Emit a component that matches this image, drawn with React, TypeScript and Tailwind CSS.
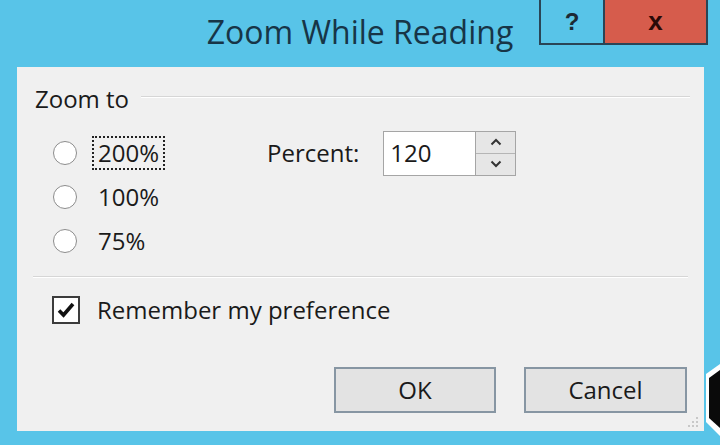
import React from "react";

const body = { fontFamily: '"Open Sans", "Noto Sans", sans-serif' };

function Radio({ label, focused }: { label: string; focused?: boolean }) {
  return (
    <div className="flex h-[44px] items-center">
      <div className="ml-[36px] h-[24px] w-[24px] rounded-full border-[1.5px] border-[#8c8c8c] bg-white" />
      <div
        className={
          focused
            ? "ml-[15px] flex h-[34px] items-center border-2 border-dotted border-[#222] px-[4px]"
            : "ml-[21px] flex h-[34px] items-center"
        }
      >
        <span className="text-[24px] leading-none text-[#1a1a1a]">{label}</span>
      </div>
    </div>
  );
}

function Spinner() {
  return (
    <div className="flex h-[45px] w-[40px] flex-col border border-l-0 border-[#a5a5a5] bg-[#e6e6e6]">
      <div className="flex flex-1 items-center justify-center border-b border-[#b5b5b5]">
        <svg width="12" height="8" viewBox="0 0 12 8">
          <path d="M1.5 6.5 L6 2 L10.5 6.5" fill="none" stroke="#333" strokeWidth="2" />
        </svg>
      </div>
      <div className="flex flex-1 items-center justify-center">
        <svg width="12" height="8" viewBox="0 0 12 8">
          <path d="M1.5 1.5 L6 6 L10.5 1.5" fill="none" stroke="#333" strokeWidth="2" />
        </svg>
      </div>
    </div>
  );
}

function Button({ label, className }: { label: string; className: string }) {
  return (
    <div
      className={
        "flex h-[46px] items-center justify-center border-2 border-[#8796a3] bg-[#e3e3e3] text-[24px] text-[#1a1a1a] " +
        className
      }
    >
      {label}
    </div>
  );
}

export default function App() {
  return (
    <div className="relative flex h-[445px] w-[720px] flex-col overflow-hidden bg-[#58c4e8]" style={body}>
      {/* caption bar */}
      <div className="grid h-[67px] grid-cols-[1fr_auto_1fr]">
        <div />
        <div className="pt-[12px] text-[32px] leading-[40px] text-[#173547]">Zoom While Reading</div>
        <div className="flex justify-end pr-[12px]">
          <div className="flex h-[45px] border-2 border-t-0 border-[#2a4556]">
            <div className="flex w-[62px] items-center justify-center text-[24px] font-bold text-[#1c2a35]" style={{ fontFamily: '"Liberation Sans", sans-serif' }}>
              ?
            </div>
            <div className="flex w-[103px] items-center justify-center border-l-2 border-[#2a4556] bg-[#d65c4c] text-[26px] font-bold text-[#2a0a08]" style={{ fontFamily: '"Liberation Sans", sans-serif' }}>
              x
            </div>
          </div>
        </div>
      </div>

      {/* client area */}
      <div className="ml-[17px] mr-[16px] flex h-[364px] flex-col bg-[#f0f0f0]">
        {/* group header */}
        <div className="mt-[18px] flex h-[28px] items-center pl-[18px] pr-[14px]">
          <span className="text-[24px] leading-none text-[#1a1a1a]">Zoom to</span>
          <div className="ml-[12px] mt-[-4px] flex-1 border-t border-b border-t-[#d6d6d6] border-b-white" />
        </div>

        {/* options */}
        <div className="mt-[18px] flex">
          <div className="flex w-[250px] flex-col">
            <Radio label="200%" focused />
            <Radio label="100%" />
            <Radio label="75%" />
          </div>
          <div className="flex h-[44px] items-center">
            <span className="text-[24px] leading-none text-[#1a1a1a]">Percent:</span>
            <div className="ml-[24px] flex h-[45px] w-[93px] items-center border border-[#a5a5a5] bg-white pl-[6px] text-[24px] text-[#1a1a1a]">
              120
            </div>
            <Spinner />
          </div>
        </div>

        {/* separator */}
        <div className="mx-[16px] mt-[13px] border-t border-b border-t-[#d6d6d6] border-b-white" />

        {/* checkbox */}
        <div className="mt-[14px] flex h-[36px] items-center pl-[35px]">
          <div className="flex h-[28px] w-[28px] items-center justify-center border-2 border-[#3c3c3c] bg-white">
            <svg width="20" height="18" viewBox="0 0 20 18">
              <path d="M3 9.5 L7.5 14 L17 3" fill="none" stroke="#111" strokeWidth="3.6" strokeLinejoin="miter" />
            </svg>
          </div>
          <span className="ml-[17px] text-[24px] leading-none text-[#1a1a1a]">Remember my preference</span>
        </div>

        {/* buttons */}
        <div className="mt-[39px] flex justify-end gap-[28px] pr-[17px]">
          <Button label="OK" className="w-[162px]" />
          <Button label="Cancel" className="w-[163px]" />
        </div>

        {/* size grip */}
        <div className="mt-[2px] flex justify-end pr-[4px]">
          <svg width="14" height="14" viewBox="0 0 14 14">
            <rect x="10" y="2" width="2" height="2" fill="#c8c8c8" />
            <rect x="6" y="6" width="2" height="2" fill="#c8c8c8" />
            <rect x="10" y="6" width="2" height="2" fill="#c8c8c8" />
            <rect x="2" y="10" width="2" height="2" fill="#c8c8c8" />
            <rect x="6" y="10" width="2" height="2" fill="#c8c8c8" />
            <rect x="10" y="10" width="2" height="2" fill="#c8c8c8" />
          </svg>
        </div>
      </div>

      {/* mouse pointer at the right edge */}
      <svg className="absolute left-[700px] top-[362px]" width="20" height="76" viewBox="0 0 20 76">
        <path d="M6 12 L20 2 L20 74 L6 60 Z" fill="#fff" />
        <path d="M9 16 L20 8 L20 66 L9 56 Z" fill="#0a0a0a" />
      </svg>
    </div>
  );
}
